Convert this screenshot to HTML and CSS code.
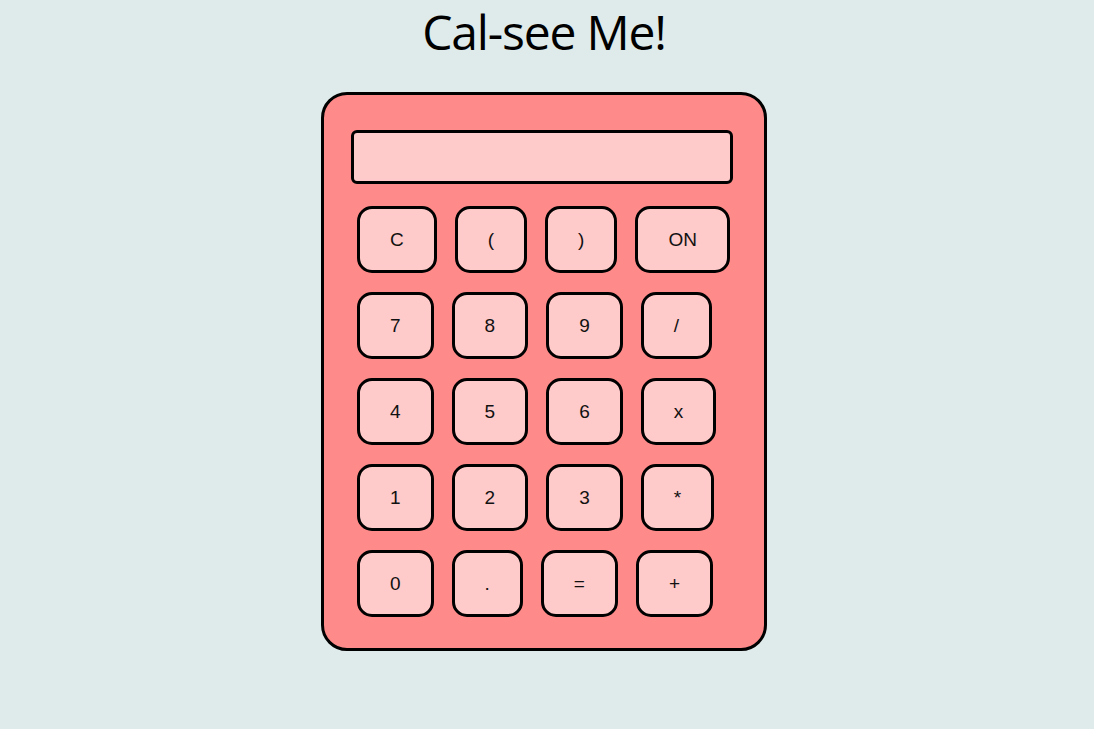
FILE: index.html
```html
<!DOCTYPE html>
<html>
<head>
<meta charset="utf-8">
<link rel="stylesheet" href="styles.css">
</head>
<body>
<h1 class="title">Cal-see Me!</h1>
<div class="calc">
  <div class="display"></div>
  <div class="keys">
    <div class="row"><button class="key">C</button><button class="key">(</button><button class="key">)</button><button class="key">ON</button></div>
    <div class="row"><button class="key">7</button><button class="key">8</button><button class="key">9</button><button class="key">/</button></div>
    <div class="row"><button class="key">4</button><button class="key">5</button><button class="key">6</button><button class="key">x</button></div>
    <div class="row"><button class="key">1</button><button class="key">2</button><button class="key">3</button><button class="key">*</button></div>
    <div class="row"><button class="key">0</button><button class="key">.</button><button class="key">=</button><button class="key">+</button></div>
  </div>
</div>
</body>
</html>
```
FILE: styles.css
```css
html, body {
  margin: 0;
  padding: 0;
  background: #dfeaea;
}
body {
  font-family: "Liberation Sans", Arial, sans-serif;
}
.title {
  font-family: "Open Sans", "Noto Sans", sans-serif;
  font-weight: 400;
  font-size: 48px;
  letter-spacing: -1.2px;
  text-align: center;
  margin: 0;
  padding: 1px 6px 0 0;
  height: 91px;
  line-height: 62px;
  color: #000;
}
.calc {
  box-sizing: border-box;
  width: 446px;
  height: 559px;
  margin-left: 321px;
  background: #ff8a8a;
  border: 3px solid #000;
  border-radius: 26px;
  padding: 35px 31px 31px 27px;
}
.display {
  box-sizing: border-box;
  width: 382px;
  height: 54px;
  background: #ffcaca;
  border: 3px solid #000;
  border-radius: 6px;
}
.keys {
  margin-top: 22px;
  padding-left: 6px;
  display: flex;
  flex-direction: column;
  gap: 19px;
}
.row {
  display: flex;
  gap: 18px;
}
.key {
  box-sizing: border-box;
  height: 67px;
  padding: 0 30px;
  background: #ffcaca;
  border: 3px solid #000;
  border-radius: 15px;
  font-family: "Liberation Sans", Arial, sans-serif;
  font-size: 19px;
  color: #111;
}
```
